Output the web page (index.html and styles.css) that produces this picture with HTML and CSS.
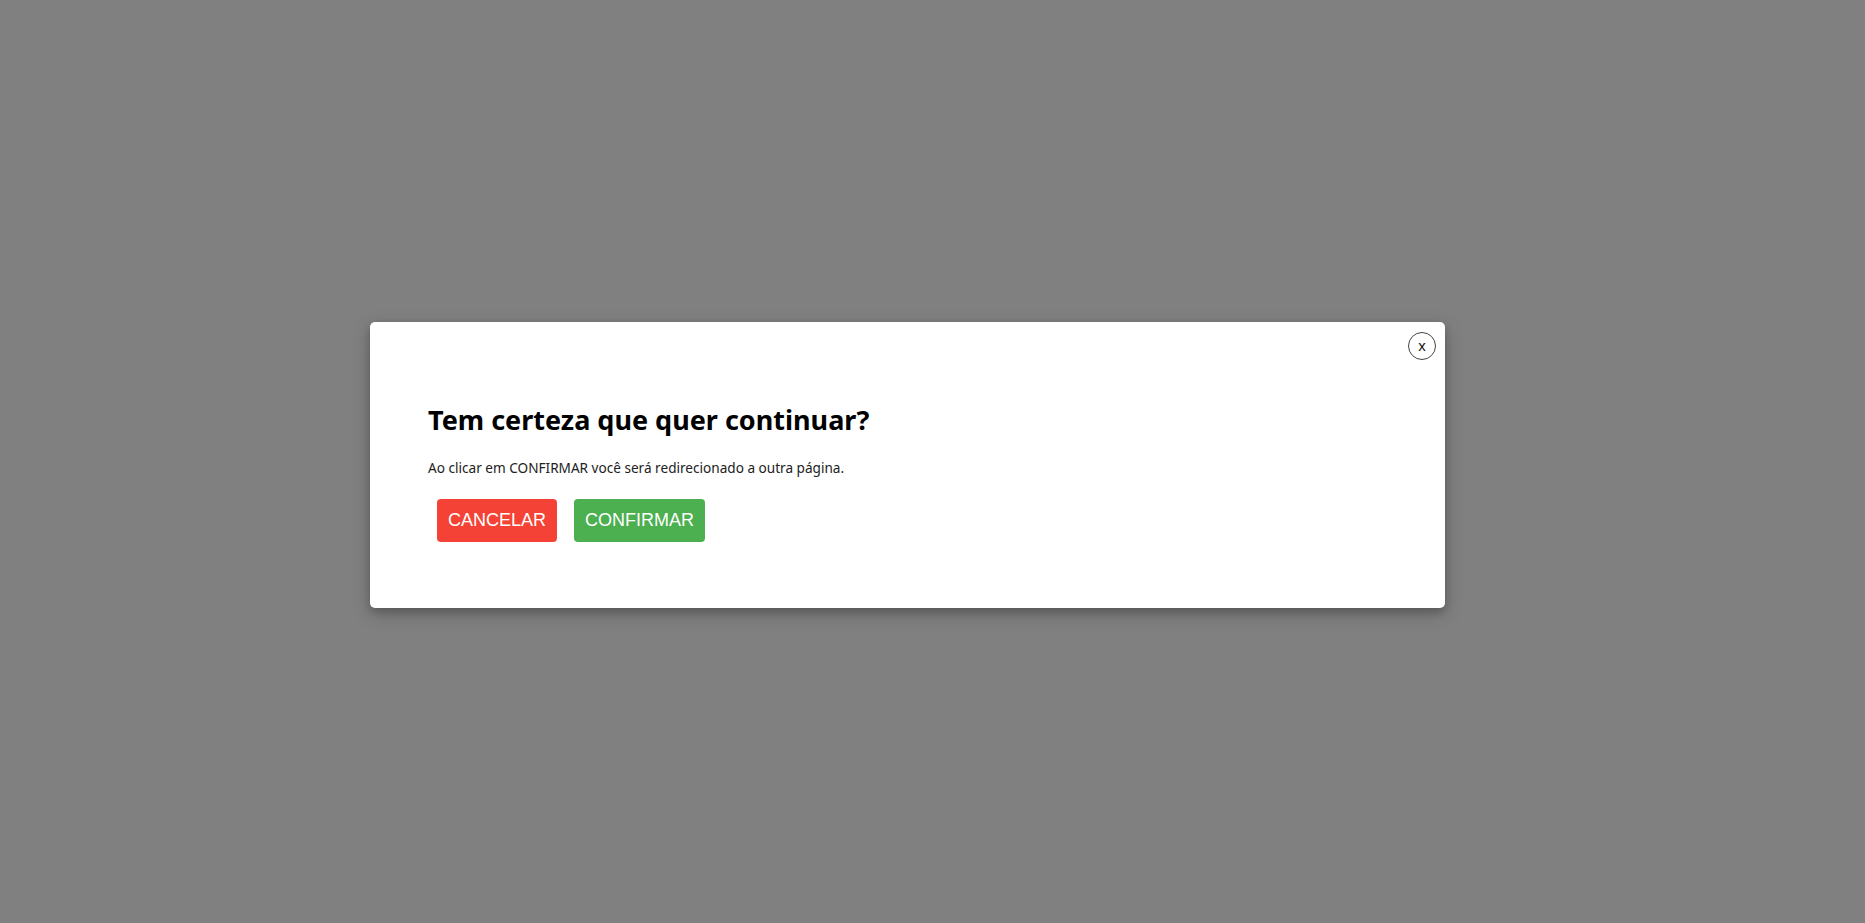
FILE: index.html
```html
<!DOCTYPE html>
<html lang="pt-BR">
<head>
<meta charset="utf-8">
<title>Confirmação</title>
<link rel="stylesheet" href="styles.css">
</head>
<body>
<div class="overlay">
  <div class="modal">
    <div class="modal-top">
      <button class="close" type="button">x</button>
    </div>
    <div class="modal-body">
      <h2 class="title">Tem certeza que quer continuar?</h2>
      <p class="text">Ao clicar em CONFIRMAR você será redirecionado a outra página.</p>
      <div class="actions">
        <button class="btn btn-cancel" type="button">CANCELAR</button>
        <button class="btn btn-confirm" type="button">CONFIRMAR</button>
      </div>
    </div>
  </div>
</div>
</body>
</html>
```
FILE: styles.css
```css
html, body {
  margin: 0;
  padding: 0;
}
body {
  font-family: "Noto Sans", "Open Sans", sans-serif;
  background: #808080;
}
.overlay {
  width: 1865px;
  height: 923px;
  padding-top: 322px;
  padding-left: 370px;
  box-sizing: border-box;
}
.modal {
  width: 1075px;
  height: 286px;
  background: #fff;
  border-radius: 5px;
  box-shadow: 0 4px 8px rgba(0,0,0,0.2), 0 6px 20px rgba(0,0,0,0.19);
  box-sizing: border-box;
}
.modal-top {
  display: flex;
  justify-content: flex-end;
  padding: 10px 9px 0 0;
}
.close {
  width: 28px;
  height: 28px;
  border-radius: 50%;
  border: 1px solid #444;
  background: #fff;
  font-family: "Liberation Sans", Arial, sans-serif;
  font-size: 15px;
  font-weight: 400;
  color: #111;
  padding: 0;
  line-height: 24px;
}
.modal-body {
  padding: 42px 0 0 58px;
}
.title {
  margin: 0;
  font-size: 27px;
  line-height: 36px;
  font-weight: 700;
  color: #000;
}
.text {
  margin: 21px 0 0 0;
  font-size: 13.6px;
  line-height: 18px;
  color: #222;
}
.actions {
  display: flex;
  gap: 17px;
  margin-top: 22px;
  padding-left: 9px;
}
.btn {
  font-family: "Liberation Sans", Arial, sans-serif;
  font-size: 18px;
  color: #fff;
  border: none;
  border-radius: 4px;
  height: 43px;
  padding: 0 11px;
}
.btn-cancel {
  background: #f44336;
}
.btn-confirm {
  background: #4caf50;
}
```
